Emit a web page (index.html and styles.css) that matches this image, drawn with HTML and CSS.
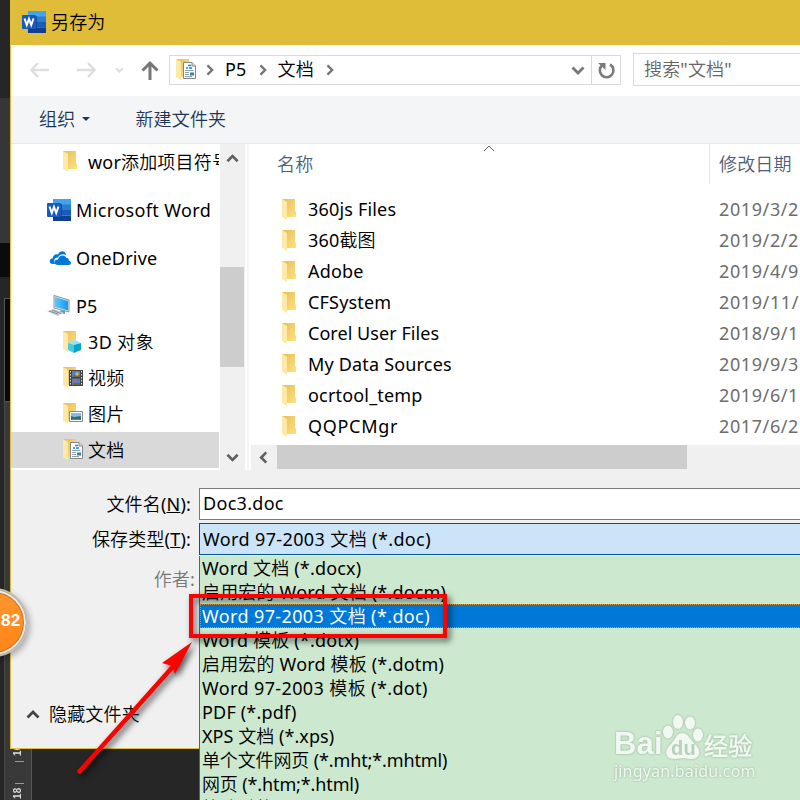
FILE: index.html
```html
<!DOCTYPE html>
<html lang="zh-CN">
<head>
    <meta charset="UTF-8">
    <meta name="viewport" content="width=device-width, initial-scale=1.0">
    <title>另存为</title>
    <link rel="stylesheet" href="styles.css">
</head>
<body>
    <!-- shared icons -->
    <svg class="symbols" width="0" height="0">
        <defs>
            <linearGradient id="fold" x1="0" x2="1" y1="0" y2="1">
                <stop offset="0" stop-color="#e6bd58"/>
                <stop offset="1" stop-color="#ffe180"/>
            </linearGradient>
            <linearGradient id="screen" x1="0" x2="1">
                <stop offset="0" stop-color="#5ec8ff"/>
                <stop offset="1" stop-color="#139af0"/>
            </linearGradient>
        </defs>
        <symbol id="folder" viewBox="0 0 20 22">
            <path d="M0 0H13V12L14 13V18H1L0 17Z" fill="url(#fold)"/>
            <path d="M0 0L5 3V21L0 18Z" fill="#ffe9a8"/>
        </symbol>
        <symbol id="word" viewBox="0 0 24 22">
            <path d="M6 0H24V6H6Z" fill="#41a5ee"/>
            <path d="M6 5.5H24V11H6Z" fill="#2b7cd3"/>
            <path d="M6 11H24V16.500H6Z" fill="#185abd"/>
            <path d="M6 16.500H24V22H6Z" fill="#103f91"/>
            <path d="M6 5H15V19H6Z" fill="#0b3577" opacity=".6"/>
            <rect y="4" width="14" height="14" rx="1" fill="#185abd"/>
            <path d="M2.500 7.500L4.800 14L7 8L9.200 14L11.500 7.500" fill="none" stroke="#fff" stroke-width="2"/>
        </symbol>
        <symbol id="page" viewBox="0 0 13 17">
            <path d="M.5 .5H9L12.500 4V16.500H.5Z" fill="#fff" stroke="#858585"/>
            <path d="M9 .5V4H12.500" fill="#ddd" stroke="#858585"/>
            <path d="M5 3.500H8M3 6H5M6 6H9" stroke="#1684d8" stroke-width="1.500"/>
            <path d="M2 8.500H10.500M2 10.500H6M2 12.500H6M2 14.500H9" stroke="#8ba2ae"/>
            <path d="M7 10.500H11V13.500H7Z" fill="#38819c"/>
        </symbol>
        <symbol id="chevron" viewBox="0 0 14 9">
            <path d="M1.500 1.500L7 7L12.500 1.500" fill="none" stroke="currentColor" stroke-width="2.800"/>
        </symbol>
    </svg>

    <div class="desktop">
        <div class="backdrop">
            <div class="tone-mid"></div>
            <div class="tone-dark"></div>
            <div class="tone-black"></div>
            <div class="ruler"><span>16</span><i></i><i></i><span>18</span></div>
        </div>

        <div class="dialog">
            <header class="titlebar">
                <svg class="word-icon"><use href="#word"/></svg>
                <span>另存为</span>
            </header>

            <nav class="navbar">
                <svg class="arrow back" viewBox="0 0 20 16"><path d="M19 8H2M8 1L1.500 8L8 15"/></svg>
                <svg class="arrow forward" viewBox="0 0 20 16"><path d="M1 8H18M12 1L18.500 8L12 15"/></svg>
                <svg class="recent"><use href="#chevron"/></svg>
                <svg class="up" viewBox="0 0 18 19"><path d="M9 19V2M1.500 9.500L9 2L16.500 9.500"/></svg>
                <div class="address">
                    <span class="folder-icon"><svg class="base"><use href="#folder"/></svg><svg class="badge page-badge"><use href="#page"/></svg></span>
                    <svg class="crumb"><use href="#chevron"/></svg>
                    <span class="crumb-text">P5</span>
                    <svg class="crumb"><use href="#chevron"/></svg>
                    <span class="crumb-text">文档</span>
                    <svg class="crumb"><use href="#chevron"/></svg>
                    <svg class="history"><use href="#chevron"/></svg>
                    <div class="refresh">
                        <svg viewBox="0 0 17 17"><path d="M12 2.500A6.800 6.800 0 1 1 4.500 3" fill="none" stroke="#7b7b7b" stroke-width="2.600"/><path d="M0 1H7.500V8Z" fill="#7b7b7b"/></svg>
                    </div>
                </div>
                <div class="search">搜索"文档"</div>
            </nav>

            <div class="toolbar">
                <span>组织</span><i class="caret"></i>
                <span class="new-folder">新建文件夹</span>
            </div>

            <main class="content">
                <ul class="tree">
                    <li class="sub"><span class="folder-icon"><svg class="base"><use href="#folder"/></svg></span><span class="label">wor添加项目符号</span></li>
                    <li class="root"><svg class="word-icon"><use href="#word"/></svg><span class="label wide">Microsoft Word</span></li>
                    <li class="root"><svg class="cloud" viewBox="0 0 22 14"><path d="M4 13C0 13-.5 8 3.500 7.500C4 3.500 7.500 2.500 9 3.500C11-1 16.500-.5 17 4C12 2 9.500 5 9 6.500C5.500 6.500 4 10 6 13Z" fill="#0078d7"/><path d="M8.500 14C4 13.500 4.500 8.500 9 8.500C10 3.500 16 3.500 17.500 7C20 7 20 9 19.500 9.500C23 10 22.500 14 20 14Z" fill="#0078d7"/></svg><span class="label">OneDrive</span></li>
                    <li class="root"><svg class="pc" viewBox="0 0 24 22"><path d="M7 .5L22 5V17L7 13Z" fill="#e4eef3" stroke="#8293a0"/><path d="M8 2L21 6V15.500L8 12Z" fill="url(#screen)"/><path d="M14 15L18 16V19L12 18Z" fill="#8595a0"/><path d="M0 16L7 14L17 18L10 21Z" fill="#c8d2da"/><path d="M2 16L11 19M5 15L14 18.500" stroke="#7f8e99"/></svg><span class="label">P5</span></li>
                    <li class="sub"><span class="folder-icon"><svg class="base"><use href="#folder"/></svg><svg class="badge cube" viewBox="0 0 13 13"><path d="M0 3L7 0L13 3L6 5Z" fill="#8ce9f4"/><path d="M0 3L6 5V13L0 10Z" fill="#48c8e2"/><path d="M6 5L13 3V10L6 13Z" fill="#0ca3c9"/></svg></span><span class="label wide">3D 对象</span></li>
                    <li class="sub"><span class="folder-icon"><svg class="base"><use href="#folder"/></svg><svg class="badge film" viewBox="0 0 14 16"><path d="M0 0H14V16H0Z" fill="#444"/><path d="M3 1H11V7H3ZM3 8.500H11V15H3Z" fill="#4a82d9"/><path d="M4 5H11V7H4ZM4 13H11V15H4Z" fill="#7d6430"/><circle cx="8" cy="4" r="1.800" fill="#d8bd2e"/><circle cx="6" cy="11" r="1.500" fill="#e06039"/><path d="M1.500 1V15M12.500 1V15" stroke="#ddd" stroke-dasharray="1.500 1.500"/></svg></span><span class="label">视频</span></li>
                    <li class="sub"><span class="folder-icon"><svg class="base"><use href="#folder"/></svg><svg class="badge photo" viewBox="0 0 14 11"><path d="M.5 .5H13.500V10.500H.5Z" fill="#fff" stroke="#888"/><path d="M2 2H12V6H2Z" fill="#83bde8"/><path d="M2 5L5 6L12 5V9H2Z" fill="#31706a"/><path d="M3 8H12V9H3Z" fill="#4289bd"/></svg></span><span class="label">图片</span></li>
                    <li class="sub selected"><span class="folder-icon"><svg class="base"><use href="#folder"/></svg><svg class="badge page-badge"><use href="#page"/></svg></span><span class="label">文档</span></li>
                </ul>
                <div class="vscroll">
                    <svg class="flip"><use href="#chevron"/></svg>
                    <div class="vthumb"></div>
                    <svg><use href="#chevron"/></svg>
                </div>
                <section class="files">
                    <div class="columns">
                        <span class="col-name">名称</span>
                        <svg class="sort" viewBox="0 0 12 7"><path d="M1 6L6 1L11 6" fill="none" stroke="#666"/></svg>
                        <span class="col-date">修改日期</span>
                    </div>
                    <ul class="file-list">
                        <li><svg class="base"><use href="#folder"/></svg><span>360js Files</span><time>2019/3/2</time></li>
                        <li><svg class="base"><use href="#folder"/></svg><span>360截图</span><time>2019/2/2</time></li>
                        <li><svg class="base"><use href="#folder"/></svg><span>Adobe</span><time>2019/4/9</time></li>
                        <li><svg class="base"><use href="#folder"/></svg><span>CFSystem</span><time>2019/11/</time></li>
                        <li><svg class="base"><use href="#folder"/></svg><span class="tight">Corel User Files</span><time>2018/9/1</time></li>
                        <li><svg class="base"><use href="#folder"/></svg><span>My Data Sources</span><time>2019/9/3</time></li>
                        <li><svg class="base"><use href="#folder"/></svg><span>ocrtool_temp</span><time>2019/6/1</time></li>
                        <li><svg class="base"><use href="#folder"/></svg><span class="wider">QQPCMgr</span><time>2017/6/2</time></li>
                    </ul>
                    <div class="hscroll"><svg><use href="#chevron"/></svg><div class="hthumb"></div></div>
                </section>
            </main>

            <div class="form">
                <div class="form-row">
                    <label>文件名(<u>N</u>):</label>
                    <div class="field name-field">Doc3.doc</div>
                </div>
                <div class="form-row">
                    <label>保存类型(<u>T</u>):</label>
                    <div class="field type-field"><span class="wide">Word 97-2003 文档 (*.doc)</span>
                        <ul class="dropdown">
                            <li>Word 文档 (*.docx)</li>
                            <li>启用宏的 Word 文档 (*.docm)</li>
                            <li class="active wide">Word 97-2003 文档 (*.doc)</li>
                            <li>Word 模板 (*.dotx)</li>
                            <li>启用宏的 Word 模板 (*.dotm)</li>
                            <li class="wide">Word 97-2003 模板 (*.dot)</li>
                            <li>PDF (*.pdf)</li>
                            <li class="tight">XPS 文档 (*.xps)</li>
                            <li class="narrow">单个文件网页 (*.mht;*.mhtml)</li>
                            <li class="narrow">网页 (*.htm;*.html)</li>
                            <li class="narrow">筛选过的网页 (*.htm;*.html)</li>
                        </ul>
                    </div>
                </div>
                <div class="author">作者:</div>
                <div class="hide-folders"><svg class="flip"><use href="#chevron"/></svg><span>隐藏文件夹</span></div>
            </div>
        </div>

        <div class="ball">82</div>
        <div class="highlight"></div>
        <svg class="pointer" viewBox="0 0 130 150">
            <path d="M9.500 141.500L107 32" stroke="#f00" stroke-width="4.500" stroke-linecap="round"/>
            <path d="M122 12L105 44L102 36L92 33Z" fill="#f00"/>
        </svg>
        <div class="watermark">
            <div class="brand">
                <span class="bai">Bai</span>
                <svg class="paw" viewBox="0 0 42 46"><g class="paw-shape"><ellipse cx="6" cy="18" rx="5" ry="6.500"/><ellipse cx="16" cy="8" rx="5" ry="7"/><ellipse cx="28" cy="9" rx="5" ry="6.500"/><ellipse cx="36" cy="21" rx="5" ry="6.500"/><path d="M20 19C27 19 28 26 34 31C41 39 36 46 28 45C22 44 19 44 14 45C5 46 1 39 7 32C13 27 14 19 20 19Z"/></g><text x="9" y="41">du</text></svg>
                <span class="jingyan">经验</span>
            </div>
            <div class="site">jingyan.baidu.com</div>
        </div>
    </div>
</body>
</html>
```
FILE: styles.css
```css
* {
    box-sizing: border-box;
}
body {
    margin: 0;
    font-family: "Noto Sans", "Noto Sans CJK SC DemiLight", "Noto Sans CJK SC", sans-serif;
    font-size: 18px;
    line-height: 24px;
    letter-spacing: .18px;
    color: #000;
}
ul {
    list-style: none;
    margin: 0;
    padding: 0;
}
svg {
    display: block;
    flex: none;
    overflow: visible;
}
.symbols {
    position: absolute;
}

/* text widths */
.wide {
    letter-spacing: .38px;
}
.wider {
    letter-spacing: .7px;
}
.tight {
    letter-spacing: .05px;
}
.narrow {
    letter-spacing: -.13px;
}

.desktop {
    position: relative;
    width: 800px;
    height: 800px;
    overflow: hidden;
    background: #262626;
    padding-left: 10px;
}

/* dark editor behind the dialog */
.backdrop {
    position: absolute;
    inset: 0;
    display: flex;
    flex-direction: column;
    padding-top: 98px;
}
.tone-mid {
    height: 145px;
    background: #363636;
}
.tone-dark {
    height: 36px;
    background: #0b0b0b;
    border-bottom: 2px solid #222;
}
.tone-black {
    height: 104px;
    margin: 19px 0 0 4px;
    background: #090909;
    border: 1px solid #555;
}
.ruler {
    width: 28px;
    height: 398px;
    margin-left: 4px;
    padding-top: 336px;
    background: #393939;
    border-left: 1px solid #494949;
    border-right: 1px solid #555;
    color: #ddd;
    font: bold 10px/16px "Liberation Sans", sans-serif;
}
.ruler span {
    display: block;
    width: 16px;
    height: 18px;
    margin-left: 5px;
    writing-mode: vertical-rl;
    transform: rotate(180deg);
}
.ruler i {
    display: block;
    width: 9px;
    height: 1px;
    margin: 5px 0 0 10px;
    background: #999;
}
.ruler i + i {
    margin: 21px 0 -3px 10px;
}

/* dialog */
.dialog {
    position: relative;
    width: 800px;
    height: 749px;
    background: #f0f0f0;
    border: solid #e0bd38;
    border-width: 0 0 1px 1px;
}
.titlebar {
    height: 45px;
    padding: 0 0 1px 11px;
    display: flex;
    align-items: center;
    gap: 5px;
    background: #e0bd38;
}
.word-icon {
    width: 24px;
    height: 22px;
}
.navbar {
    height: 51px;
    display: flex;
    align-items: center;
    background: #fff;
    padding-bottom: 1px;
}
.arrow,
.up {
    fill: none;
    stroke: #dedede;
    stroke-width: 2.5;
}
.arrow {
    width: 20px;
    height: 16px;
}
.back {
    margin-left: 19px;
}
.forward {
    margin-left: 26px;
}
.recent {
    width: 9px;
    height: 6px;
    margin-left: 19px;
    color: #dcdcdc;
}
.up {
    width: 18px;
    height: 19px;
    margin-left: 17px;
    stroke: #777;
    stroke-width: 3;
}
.address {
    width: 452px;
    height: 30px;
    margin-left: 10px;
    display: flex;
    flex: none;
    align-items: center;
    border: 1px solid #d9d9d9;
    padding-left: 6px;
}
.folder-icon {
    position: relative;
    width: 20px;
    height: 22px;
    flex: none;
}
.base {
    width: 20px;
    height: 22px;
}
.badge {
    position: absolute;
    left: 7px;
    top: 3px;
}
.page-badge {
    width: 13px;
    height: 17px;
}
.cube {
    width: 13px;
    height: 13px;
    left: 5px;
    top: 9px;
}
.film {
    width: 14px;
    height: 16px;
    left: 6px;
}
.photo {
    width: 14px;
    height: 11px;
    left: 6px;
    top: 8px;
}
.crumb {
    width: 12px;
    height: 8px;
    margin: 0 9px 0 8px;
    color: #777;
    transform: rotate(-90deg);
}
.crumb-text {
    margin-top: -2px;
}
.crumb-text + .crumb {
    margin-left: 10px;
}
.history {
    width: 14px;
    height: 9px;
    margin: 0 6px 0 auto;
    color: #777;
}
.refresh {
    width: 29px;
    height: 28px;
    border-left: 1px solid #d9d9d9;
    display: grid;
    place-items: center;
}
.refresh svg {
    width: 17px;
    height: 17px;
}
.search {
    width: 200px;
    height: 33px;
    margin: -1px 0 0 12px;
    padding: 3px 10px;
    border: 1px solid #d9d9d9;
    color: #666;
    flex: none;
}
.toolbar {
    height: 48px;
    padding: 0 0 2px 28px;
    display: flex;
    align-items: center;
    background: #f4f5f7;
    border-bottom: 1px solid #e6e7e9;
    color: #1d3557;
}
.caret {
    margin-left: 7px;
    border: 4px solid transparent;
    border-top-color: #1d3557;
    border-bottom: 0;
}
.new-folder {
    margin-left: 45px;
}

/* folder tree */
.content {
    height: 326px;
    display: flex;
    background: #fff;
}
.tree {
    width: 208px;
    overflow: hidden;
}
.tree li {
    display: flex;
    align-items: center;
    white-space: nowrap;
}
.sub {
    height: 36px;
    padding-left: 52px;
}
.sub .label {
    margin-left: 5px;
}
.root {
    height: 48px;
    padding: 12px 0 0 36px;
}
.root .label {
    margin-left: 5px;
}
.cloud {
    width: 22px;
    height: 14px;
    margin: 0 0 0 2px;
}
.pc {
    width: 24px;
    height: 22px;
}
.selected {
    background: #d9d9d9;
}
.vscroll {
    width: 25px;
    margin-left: 1px;
    padding: 10px 1px 8px 0;
    display: flex;
    flex-direction: column;
    align-items: center;
    justify-content: space-between;
    background: #f0f0f0;
    color: #606060;
}
.vscroll svg {
    width: 13px;
    height: 9px;
}
.vthumb {
    width: 24px;
    height: 100px;
    margin: 18px 0 0;
    background: #cdcdcd;
}
.flip {
    transform: scaleY(-1);
}

/* file list */
.files {
    flex: 1;
    margin-left: 2px;
    border-left: 2px solid #f5f5f5;
    display: flex;
    flex-direction: column;
}
.columns {
    height: 40px;
    display: flex;
    align-items: center;
    color: #4c607a;
}
.col-name {
    width: 205px;
    padding-left: 28px;
}
.sort {
    width: 12px;
    height: 7px;
    margin: 0 0 32px 29px;
}
.col-date {
    height: 40px;
    margin-left: auto;
    width: 101px;
    padding: 8px 0 0 9px;
    border-left: 1px solid #e5e5e5;
}
.file-list {
    height: 261px;
    padding: 10px 0 0 33px;
}
.file-list li {
    height: 31px;
    display: flex;
    align-items: center;
}
.file-list span,
.file-list time {
    margin-top: -2px;
}
.file-list span {
    width: 417px;
    flex: none;
    padding-left: 6px;
}
.file-list time {
    color: #6d6d6d;
    white-space: nowrap;
    letter-spacing: .6px;
}
.hscroll {
    height: 25px;
    margin-left: 2px;
    display: flex;
    align-items: center;
    background: #f0f0f0;
    color: #606060;
}
.hscroll svg {
    width: 13px;
    height: 9px;
    margin: 0 7px 0 6px;
    transform: rotate(90deg);
}
.hthumb {
    width: 410px;
    height: 24px;
    margin-bottom: 1px;
    background: #cdcdcd;
}

/* name, type and author */
.form {
    padding-top: 17px;
}
.form-row {
    display: flex;
    align-items: center;
    height: 33px;
    margin-bottom: 2px;
}
.form-row label {
    width: 188px;
    padding-right: 8px;
    text-align: right;
}
.field {
    position: relative;
    flex: 1;
    height: 32px;
    padding: 3px 3px;
    background: #fff;
    border: 1px solid #7a7a7a;
}
.name-field {
    padding-top: 2px;
    letter-spacing: .3px;
}
.type-field {
    background: #cce4f7;
    border-color: #005499;
}
.dropdown {
    position: absolute;
    left: -1px;
    top: 32px;
    width: 620px;
    height: 300px;
    overflow: hidden;
    border-left: 1px solid #0078d7;
    background: #cce8cf;
}
.dropdown li {
    height: 24px;
    padding-left: 2px;
}
.dropdown .active {
    color: #fff;
    background: #0078d7;
    outline: 1px dotted #d99a43;
    outline-offset: -1px;
}
.author {
    width: 184px;
    margin-top: 12px;
    text-align: right;
    color: #777;
}
.hide-folders {
    margin: 111px 0 0 15px;
    display: flex;
    align-items: center;
    gap: 9px;
}
.hide-folders svg {
    width: 14px;
    height: 9px;
    color: #444;
}

/* overlays */
.ball {
    position: absolute;
    left: -41px;
    top: 588px;
    width: 69px;
    height: 69px;
    padding: 19px 0 0 40px;
    border: 2px solid #bbb;
    border-radius: 50%;
    background: linear-gradient(#ff962f, #ff8515);
    box-shadow: inset 0 0 0 2px #eee, inset 0 0 0 3px #d46e15, 2px 3px 6px rgba(0, 0, 0, .3);
    color: #fff;
    font: bold 17px/24px "Liberation Sans", sans-serif;
}
.highlight {
    position: absolute;
    left: 189px;
    top: 594px;
    width: 258px;
    height: 44px;
    border: 4px solid #f00;
    filter: drop-shadow(3px 3px 3px rgba(0, 0, 0, .65));
}
.pointer {
    position: absolute;
    left: 70px;
    top: 630px;
    width: 130px;
    height: 150px;
    filter: drop-shadow(3px 3px 3px rgba(0, 0, 0, .65));
}
.watermark {
    position: absolute;
    left: 614px;
    top: 714px;
    width: 145px;
    color: #f1f8f2;
    filter: drop-shadow(0 0 1px rgba(110, 145, 115, .65));
}
.brand {
    display: flex;
    align-items: flex-end;
    height: 46px;
}
.bai {
    width: 48px;
    font: bold 31px/32px "Liberation Sans", sans-serif;
}
.paw {
    width: 42px;
    height: 46px;
    fill: #f1f8f2;
}
.paw text {
    font: bold 20px "Liberation Sans", sans-serif;
    fill: #b7d1bb;
}
.jingyan {
    font-size: 24px;
    font-weight: bold;
    line-height: 28px;
}
.site {
    font-size: 16px;
    line-height: 22px;
}
```
